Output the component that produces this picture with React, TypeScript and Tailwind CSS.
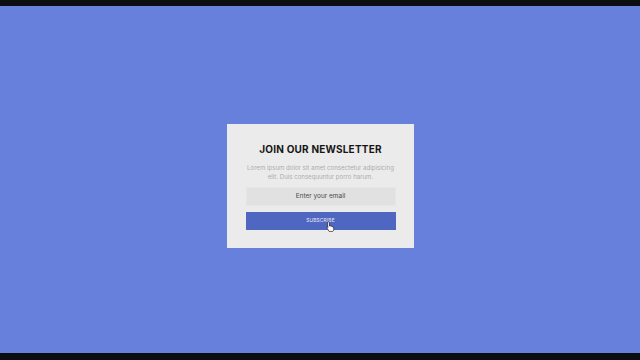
import React from "react";

const Cursor = () => (
  <svg width="9" height="11" viewBox="0 0 18 22" className="absolute left-[80px] top-[9px]">
    <path
      d="M5 1.5c1 0 1.8.8 1.8 1.8V10l.5-.1c.9-.6 2.2-.2 2.6.7.9-.5 2.1-.1 2.5.8 1-.4 2.1.1 2.4 1.1l.7 3.2c.3 1.5-.1 3-1.1 4.1l-.9 1H6.2L2.3 14.5c-.6-.8-.4-1.9.4-2.4.6-.4 1.4-.3 1.9.2l-1.4-.4V3.3C3.2 2.3 4 1.5 5 1.5z"
      fill="#fff"
      stroke="#111"
      strokeWidth="1.3"
      strokeLinejoin="round"
    />
  </svg>
);

export default function App() {
  return (
    <div className="w-[640px] h-[360px] flex flex-col bg-[#0c0d10] overflow-hidden" style={{ fontFamily: "Inter, 'Liberation Sans', sans-serif" }}>
      <div className="h-[6px] bg-[#0c0d10]" />
      <div className="flex-1 bg-[#6680dc] flex items-center justify-center pt-[13px]">
        {/* Newsletter card */}
        <div className="w-[187px] h-[124px] bg-[#ebebeb] flex flex-col items-center pt-[18px] pl-[19px] pr-[18px]">
          <h1 className="text-[10px] leading-[14px] font-bold tracking-[0.2px] text-[#151515]">JOIN OUR NEWSLETTER</h1>
          <p className="mt-[7px] text-[6.1px] leading-[9px] text-[#ababab] text-center whitespace-nowrap">
            Lorem ipsum dolor sit amet consectetur adipisicing
            <br />
            elit. Duis consequuntur porro harum.
          </p>
          <div className="mt-[6px] w-[150px] h-[19px] bg-[#e1e1e1] border border-[#e6e6e6] flex items-center justify-center text-[6.5px] text-[#4a4a4a]">
            Enter your email
          </div>
          <div className="relative mt-[6px] w-[150px] h-[18px] bg-[#4f67c0] flex items-center justify-center text-[4.8px] tracking-[0.2px] text-[#e8ecfa]">
            SUBSCRIBE
            <Cursor />
          </div>
        </div>
      </div>
      <div className="h-[7px] bg-[#0c0d10]" />
    </div>
  );
}
